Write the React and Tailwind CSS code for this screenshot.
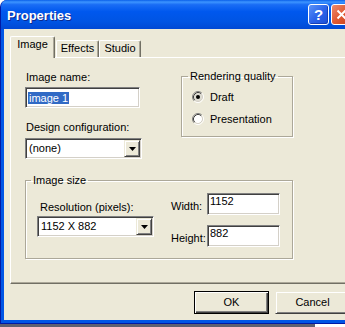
import React from 'react';

const sunken =
    'border border-t-[#808080] border-l-[#808080] border-r-white border-b-white shadow-[inset_1px_1px_0_#404040,inset_-1px_-1px_0_#d4d0c8]';
const raised =
    'border border-t-[#ece9d8] border-l-[#ece9d8] border-r-[#404040] border-b-[#404040] shadow-[inset_1px_1px_0_#fff,inset_-1px_-1px_0_#808080]';
const group =
    'border border-[#aca899] shadow-[inset_1px_1px_0_#fff,1px_1px_0_#fff] rounded-none';

const Arrow = () => (
    <svg width="7" height="4" viewBox="0 0 7 4">
        <path d="M0 0h7L3.5 4z" fill="#000" />
    </svg>
);

const Combo = ({ value, className }) => (
    <div className={`flex h-[21px] bg-white p-[1px] ${sunken} ${className}`}>
        <div className="flex-1 flex items-center pl-[2px] leading-[13px]">{value}</div>
        <div className={`w-[16px] h-full bg-[#ece9d8] flex items-center justify-center ${raised}`}>
            <Arrow />
        </div>
    </div>
);

const Field = ({ value, className }) => (
    <div className={`bg-white p-[1px] pl-[2px] leading-[13px] ${sunken} ${className}`}>{value}</div>
);

const Radio = ({ checked }) => (
    <svg width="12" height="12" viewBox="0 0 12 12">
        <circle cx="6" cy="6" r="4" fill={checked ? '#dddbd2' : '#fff'} />
        <path d="M9.89 2.11A5.5 5.5 0 0 0 2.11 9.89" fill="none" stroke="#808080" />
        <path d="M2.11 9.89A5.5 5.5 0 0 0 9.89 2.11" fill="none" stroke="#fff" />
        <path d="M9.18 2.82A4.5 4.5 0 0 0 2.82 9.18" fill="none" stroke="#404040" />
        <path d="M2.82 9.18A4.5 4.5 0 0 0 9.18 2.82" fill="none" stroke="#d4d0c8" />
        {checked && <circle cx="6" cy="6" r="2" fill="#000" />}
    </svg>
);

const Tab = ({ label, active }) => (
    <div
        className={
            active
                ? 'relative z-10 -mb-[1px] h-[22px] w-[45px] bg-[#ece9d8] border-t border-l border-white border-r border-r-[#716f64] rounded-t-[2px] text-center pt-[1px] shadow-[inset_-1px_0_0_#aca899]'
                : 'h-[17px] bg-[#ece9d8] border-t border-l border-white border-r border-r-[#716f64] rounded-t-[2px] text-center pt-[1px] shadow-[inset_-1px_0_0_#aca899]'
        }
        style={active ? undefined : { width: label === 'Effects' ? 43 : 42 }}
    >
        {label}
    </div>
);

export default function App() {
    return (
        <div className="w-[345px] h-[327px] overflow-hidden bg-white font-['Liberation_Sans',Arial,sans-serif] text-[11px] leading-[13px] text-black">
            {/* Window */}
            <div className="w-[362px] h-[324px] flex flex-col rounded-t-[7px] overflow-hidden border-x border-b border-[#0019a5] bg-[#0055e5]">
                {/* Title bar */}
                <div className="h-[29px] shrink-0 flex items-center pl-[6px] pr-[9px] bg-[linear-gradient(180deg,#0a5fe9_0%,#3d95ff_7%,#1a6df5_16%,#0058ee_40%,#0054e3_75%,#0048d4_100%)]">
                    <div className="flex-1 text-white font-bold text-[13px] leading-[15px] pt-[2px] [text-shadow:1px_1px_0_#0b2a8f]">
                        Properties
                    </div>
                    <div className="flex gap-[2px]">
                        <div className="w-[21px] h-[21px] rounded-[3px] border border-white bg-linear-to-br from-[#5c93f8] via-[#2c64ea] to-[#1b4fd6] flex items-center justify-center text-white font-bold text-[15px] leading-none shadow-[inset_-1px_-1px_0_#1540b8]">
                            ?
                        </div>
                        <div className="w-[21px] h-[21px] rounded-[3px] border border-white bg-linear-to-br from-[#ec8a6c] via-[#e05a33] to-[#c8401c] flex items-center justify-center">
                            <svg width="11" height="11" viewBox="0 0 11 11">
                                <path d="M1.5 1.5l8 8M9.5 1.5l-8 8" stroke="#fff" strokeWidth="2" />
                            </svg>
                        </div>
                    </div>
                </div>

                {/* Client */}
                <div className="flex-1 mx-[3px] mb-[3px] bg-[#ece9d8] pt-[7px] pl-[6px] flex flex-col">
                    {/* Tabs */}
                    <div className="flex items-end h-[21px]">
                        <Tab label="Image" active />
                        <div className="ml-[1px] flex items-end">
                            <Tab label="Effects" />
                        </div>
                        <Tab label="Studio" />
                    </div>

                    {/* Panel */}
                    <div className="w-[340px] h-[227px] border-t border-l border-white border-b border-b-[#716f64] border-r border-r-[#716f64] shadow-[inset_-1px_-1px_0_#aca899] pt-[12px]">
                        <div className="flex items-start">
                            <div className="ml-[14px] w-[156px] mt-[1px]">
                                <div className="pl-[1px]">Image name:</div>
                                <Field
                                    className="mt-[3px] w-[115px] h-[21px] flex items-center"
                                    value={<span className="bg-[#316ac5] text-white px-[1px] leading-[12px]">image 1</span>}
                                />
                                <div className="mt-[13px] pl-[1px]">Design configuration:</div>
                                <Combo value="(none)" className="mt-[4px] w-[117px]" />
                            </div>

                            <fieldset className={`w-[112px] h-[67px] ${group}`}>
                                <legend className="ml-[6px] px-[2px] leading-[13px]">Rendering quality</legend>
                                <div className="mt-[3px]">
                                    <div className="h-[22px] flex items-center pl-[10px] gap-[6px]">
                                        <Radio checked />
                                        <span>Draft</span>
                                    </div>
                                    <div className="h-[22px] flex items-center pl-[10px] gap-[6px]">
                                        <Radio />
                                        <span>Presentation</span>
                                    </div>
                                </div>
                            </fieldset>
                        </div>

                        <fieldset className={`ml-[14px] mt-[15px] w-[268px] h-[85px] ${group}`}>
                            <legend className="ml-[5px] px-[2px] leading-[13px]">Image size</legend>
                            <div className="flex items-start">
                                <div className="ml-[11px] w-[117px]">
                                    <div className="mt-[14px] pl-[3px]">Resolution (pixels):</div>
                                    <Combo value="1152 X 882" className="mt-[2px] w-[117px]" />
                                </div>
                                <div className="ml-[17px] mt-[6px] flex flex-col gap-[10px]">
                                    <div className="flex items-end">
                                        <span className="w-[36px] mb-[2px]">Width:</span>
                                        <Field value="1152" className="w-[73px] h-[22px]" />
                                    </div>
                                    <div className="flex items-end">
                                        <span className="w-[36px] mb-[2px]">Height:</span>
                                        <Field value="882" className="w-[73px] h-[22px]" />
                                    </div>
                                </div>
                            </div>
                        </fieldset>
                    </div>

                    {/* Buttons */}
                    <div className="mt-[7px] flex justify-end gap-[6px] pr-[8px]">
                        <button className="w-[75px] h-[23px] bg-[#ece9d8] border border-black shadow-[inset_1px_1px_0_#fff,inset_-1px_-1px_0_#404040,inset_-2px_-2px_0_#808080]">
                            OK
                        </button>
                        <button className={`w-[75px] h-[23px] bg-[#ece9d8] ${raised}`}>Cancel</button>
                    </div>
                </div>
            </div>

            {/* Desktop strip below window */}
            <div className="flex h-[3px]">
                <div className="w-[315px] bg-[#5f6070]" />
                <div className="flex-1 bg-white" />
            </div>
        </div>
    );
}
